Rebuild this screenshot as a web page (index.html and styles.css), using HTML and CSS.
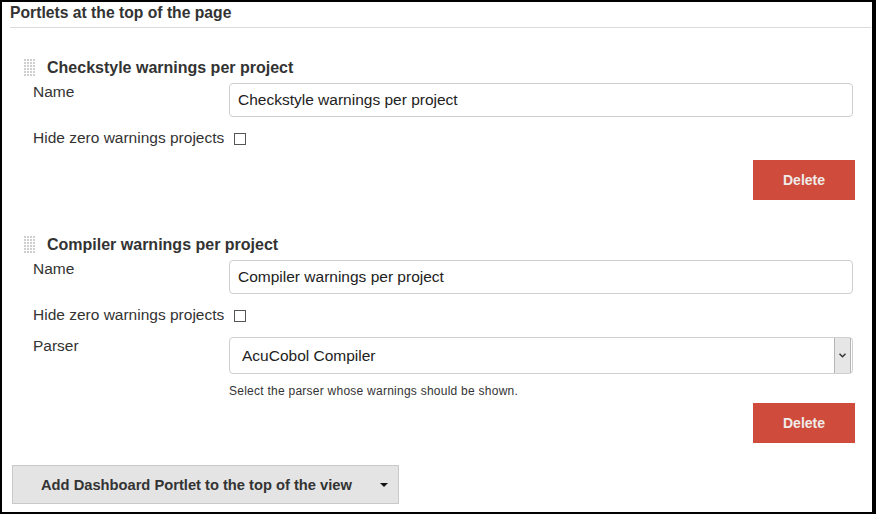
FILE: index.html
```html
<!DOCTYPE html>
<html>
<head>
<meta charset="utf-8">
<title>Portlets</title>
<link rel="stylesheet" href="styles.css">
</head>
<body>
<div class="frame">
  <div class="section-title">Portlets at the top of the page</div>

  <div class="portlet first">
    <div class="portlet-head">
      <svg class="handle" width="12" height="18" viewBox="0 0 12 18">
        <defs><pattern id="dots" width="3" height="3" patternUnits="userSpaceOnUse"><rect width="2" height="2" fill="#cfcfcf"/></pattern></defs>
        <rect width="12" height="18" fill="url(#dots)"/>
      </svg>
      <span class="portlet-title">Checkstyle warnings per project</span>
    </div>
    <div class="row">
      <div class="lbl">Name</div>
      <div class="field">Checkstyle warnings per project</div>
    </div>
    <div class="check-row">
      <span>Hide zero warnings projects</span><span class="checkbox"></span>
    </div>
    <div class="actions"><button class="btn-delete">Delete</button></div>
  </div>

  <div class="portlet second">
    <div class="portlet-head">
      <svg class="handle" width="12" height="18" viewBox="0 0 12 18">
        <defs><pattern id="dots2" width="3" height="3" patternUnits="userSpaceOnUse"><rect width="2" height="2" fill="#cfcfcf"/></pattern></defs>
        <rect width="12" height="18" fill="url(#dots2)"/>
      </svg>
      <span class="portlet-title">Compiler warnings per project</span>
    </div>
    <div class="row">
      <div class="lbl">Name</div>
      <div class="field">Compiler warnings per project</div>
    </div>
    <div class="check-row">
      <span>Hide zero warnings projects</span><span class="checkbox"></span>
    </div>
    <div class="row parser-row">
      <div class="lbl">Parser</div>
      <div class="value">
        <div class="select">
          <span class="select-text">AcuCobol Compiler</span>
          <span class="select-arrow">
            <svg width="7" height="5" viewBox="0 0 7 5"><path d="M0.5 0.8 L3.5 3.8 L6.5 0.8" fill="none" stroke="#333" stroke-width="1.4"/></svg>
          </span>
        </div>
        <div class="help">Select the parser whose warnings should be shown.</div>
      </div>
    </div>
    <div class="actions tight"><button class="btn-delete">Delete</button></div>
  </div>

  <button class="btn-add"><span>Add Dashboard Portlet to the top of the view</span><span class="caret"></span></button>
</div>
</body>
</html>
```

FILE: styles.css
```css
* { box-sizing: border-box; }
html, body { margin: 0; padding: 0; background: #fff; }
body {
  font-family: "Liberation Sans", Arial, sans-serif;
  color: #333;
}
.frame {
  width: 876px;
  height: 514px;
  border-top: 2px solid #000;
  border-left: 2px solid #000;
  border-right: 4px solid #000;
  border-bottom: 2px solid #000;
  padding: 0 1px 0 8px;
  display: flex;
  flex-direction: column;
  overflow: hidden;
}
.section-title {
  font-weight: bold;
  font-size: 15.7px;
  line-height: 20px;
  padding-top: 1px;
  padding-bottom: 4px;
  border-bottom: 1px solid #dcdcdc;
}
.portlet { display: flex; flex-direction: column; }
.portlet.first { margin-top: 30px; }
.portlet.second { margin-top: 35px; }
.portlet-head {
  display: flex;
  align-items: center;
  height: 20px;
  padding-left: 14px;
  gap: 11px;
}
.handle { display: block; flex: none; }
.portlet-title {
  font-weight: bold;
  font-size: 16px;
  line-height: 20px;
}
.row {
  display: flex;
  align-items: flex-start;
  margin-top: 5px;
  padding-left: 23px;
}
.portlet.second .row { margin-top: 5px; }
.portlet.second .row.parser-row { margin-top: 12px; }
.lbl {
  width: 196px;
  flex: none;
  font-size: 15.5px;
  line-height: 18px;
}
.field {
  width: 624px;
  height: 34px;
  border: 1px solid #cfcfcf;
  border-radius: 4px;
  padding-left: 8px;
  font-size: 15.5px;
  line-height: 32px;
  color: #222;
}
.check-row {
  display: flex;
  align-items: center;
  margin-top: 11px;
  padding-left: 23px;
  font-size: 15.5px;
  line-height: 20px;
}
.checkbox {
  width: 12px;
  height: 12px;
  border: 1px solid #555;
  margin-left: 10px;
  margin-top: 1px;
  background: #fff;
}
.actions {
  display: flex;
  justify-content: flex-end;
  padding-right: 16px;
  margin-top: 12px;
}
.actions.tight { margin-top: 4px; }
.btn-delete {
  width: 102px;
  height: 40px;
  border: none;
  background: #cf4b3b;
  color: #f0ecea;
  font-family: "Liberation Sans", Arial, sans-serif;
  font-weight: bold;
  font-size: 14px;
  padding: 0;
}
.value { display: flex; flex-direction: column; }
.select {
  width: 624px;
  height: 37px;
  border: 1px solid #cfcfcf;
  border-radius: 4px;
  display: flex;
  align-items: stretch;
  justify-content: space-between;
  padding: 0 1px 0 12px;
}
.select-text {
  font-size: 15.5px;
  line-height: 35px;
  color: #222;
}
.select-arrow {
  width: 17px;
  display: flex;
  align-items: center;
  justify-content: center;
  background: #e6e6e6;
  border-left: 1px solid #b5b5b5;
  border-right: 1px solid #b5b5b5;
}
.help {
  font-size: 12px;
  line-height: 16px;
  margin-top: 9px;
  color: #333;
  letter-spacing: 0.25px;
}
.btn-add {
  align-self: flex-start;
  margin-top: 22px;
  margin-left: 2px;
  width: 387px;
  height: 39px;
  background: #e4e4e4;
  border: 1px solid #c9c9c9;
  display: flex;
  align-items: center;
  padding: 0 10px 0 28px;
  font-family: "Liberation Sans", Arial, sans-serif;
  font-weight: bold;
  font-size: 14.7px;
  color: #333;
}
.caret {
  margin-left: auto;
  width: 0;
  height: 0;
  border-left: 4px solid transparent;
  border-right: 4px solid transparent;
  border-top: 4px solid #111;
}
```
